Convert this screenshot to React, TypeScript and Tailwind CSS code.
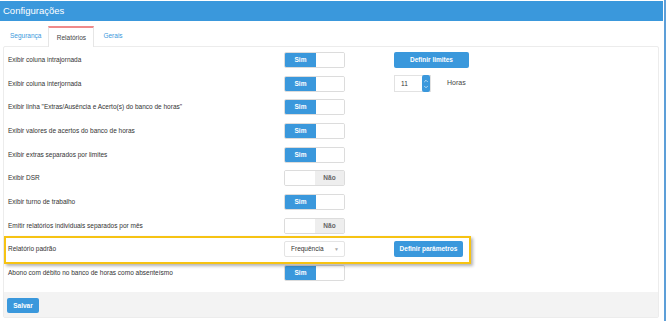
import { ChevronDown, ChevronUp } from 'lucide-react';

type Row = {
    label: string;
    value?: boolean;
    select?: string;
    extra?: 'limites' | 'horas' | 'parametros';
};

const rows: Row[] = [
    { label: 'Exibir coluna intrajornada', value: true, extra: 'limites' },
    { label: 'Exibir coluna interjornada', value: true, extra: 'horas' },
    { label: 'Exibir linha "Extras/Ausência e Acerto(s) do banco de horas"', value: true },
    { label: 'Exibir valores de acertos do banco de horas', value: true },
    { label: 'Exibir extras separados por limites', value: true },
    { label: 'Exibir DSR', value: false },
    { label: 'Exibir turno de trabalho', value: true },
    { label: 'Emitir relatórios individuais separados por mês', value: false },
    { label: 'Relatório padrão', select: 'Frequência', extra: 'parametros' },
    { label: 'Abono com débito no banco de horas como absenteísmo', value: true },
];

function Toggle({ on }: { on: boolean }) {
    return (
        <div className="flex h-[16px] w-[61px] rounded-[2px] border border-[#dcdcdc] overflow-hidden text-[6.5px] font-bold">
            {on ? (
                <>
                    <div className="w-[31px] bg-[#3a98dc] text-white flex items-center justify-center">Sim</div>
                    <div className="flex-1 bg-white" />
                </>
            ) : (
                <>
                    <div className="w-[30px] bg-white" />
                    <div className="flex-1 bg-[#eeeeee] text-[#666] flex items-center justify-center">Não</div>
                </>
            )}
        </div>
    );
}

function Extra({ kind }: { kind: Row['extra'] }) {
    if (kind === 'limites') {
        return (
            <button className="h-[16px] w-[75px] rounded-[2px] bg-[#3a98dc] text-white text-[6.5px] font-bold">
                Definir limites
            </button>
        );
    }
    if (kind === 'parametros') {
        return (
            <button className="h-[16px] w-[69px] rounded-[2px] bg-[#3a98dc] text-white text-[6.5px] font-bold">
                Definir parâmetros
            </button>
        );
    }
    if (kind === 'horas') {
        return (
            <div className="flex items-center">
                <div className="flex h-[17px] w-[37px] border border-[#e2e2e2] bg-white">
                    <span className="flex-1 pl-[6px] flex items-center text-[6.5px] text-[#333]">11</span>
                    <div className="w-[8px] my-[-1px] rounded-[2px] bg-[#3a98dc] flex flex-col items-center justify-center text-white">
                        <ChevronUp size={6} strokeWidth={2.5} />
                        <ChevronDown size={6} strokeWidth={2.5} />
                    </div>
                </div>
                <span className="ml-[16px] text-[7px] text-[#444]">Horas</span>
            </div>
        );
    }
    return null;
}

export default function App() {
    return (
        <div
            className="w-[666px] h-[321px] bg-white flex flex-col border-r-2 border-[#5d9fd8] overflow-hidden"
            style={{ fontFamily: '"Liberation Sans", Arial, sans-serif' }}
        >
            <div className="shrink-0 h-[20px] mt-[1px] mr-[1px] bg-[#3a98dc] flex items-center pl-[3px] text-white text-[9.5px]">
                Configurações
            </div>

            <div className="shrink-0 flex h-[21px] mt-[4px] pl-[3px] text-[6.5px]">
                <div className="px-[7px] flex items-center text-[#3a98dc]">Segurança</div>
                <div className="w-[46px] flex items-center justify-center text-[#444] bg-white border-t-2 border-[#f08a8a] border-x border-x-[#e6e6e6] relative top-[1px]">
                    Relatórios
                </div>
                <div className="px-[9px] flex items-center text-[#3a98dc]">Gerais</div>
            </div>

            <div className="ml-[3px] mr-[5px] border border-[#ececec] rounded-[2px] flex flex-col flex-1 min-h-0 mb-[3px]">
                <div className="shrink-0 relative pt-[1px] pb-[7px] px-[4px] flex flex-col">
                    {rows.map((row) => (
                        <div key={row.label} className="h-[23.7px] flex items-center">
                            <div className="w-[276px] text-[6.5px] text-[#333]">{row.label}</div>
                            <div className="w-[110px]">
                                {row.select ? (
                                    <div className="h-[16px] w-[61px] border border-[#e4e4e4] rounded-[2px] flex items-center justify-between pl-[6px] pr-[5px] text-[6.5px] text-[#333]">
                                        {row.select}
                                        <span className="text-[5px] text-[#aaa]">▼</span>
                                    </div>
                                ) : (
                                    <Toggle on={!!row.value} />
                                )}
                            </div>
                            <Extra kind={row.extra} />
                        </div>
                    ))}
                    <div className="absolute left-[0px] top-[189px] w-[467px] h-[28px] border-[2.5px] border-[#f6c313] shadow-[2px_2px_3px_rgba(0,0,0,0.3)] pointer-events-none" />
                </div>
                <div className="flex-1 flex items-start bg-[#f3f3f3] px-[3px] pt-[6px]">
                    <button className="h-[15px] w-[32px] rounded-[2px] bg-[#3a98dc] text-white text-[6.5px] font-bold">
                        Salvar
                    </button>
                </div>
            </div>
        </div>
    );
}
